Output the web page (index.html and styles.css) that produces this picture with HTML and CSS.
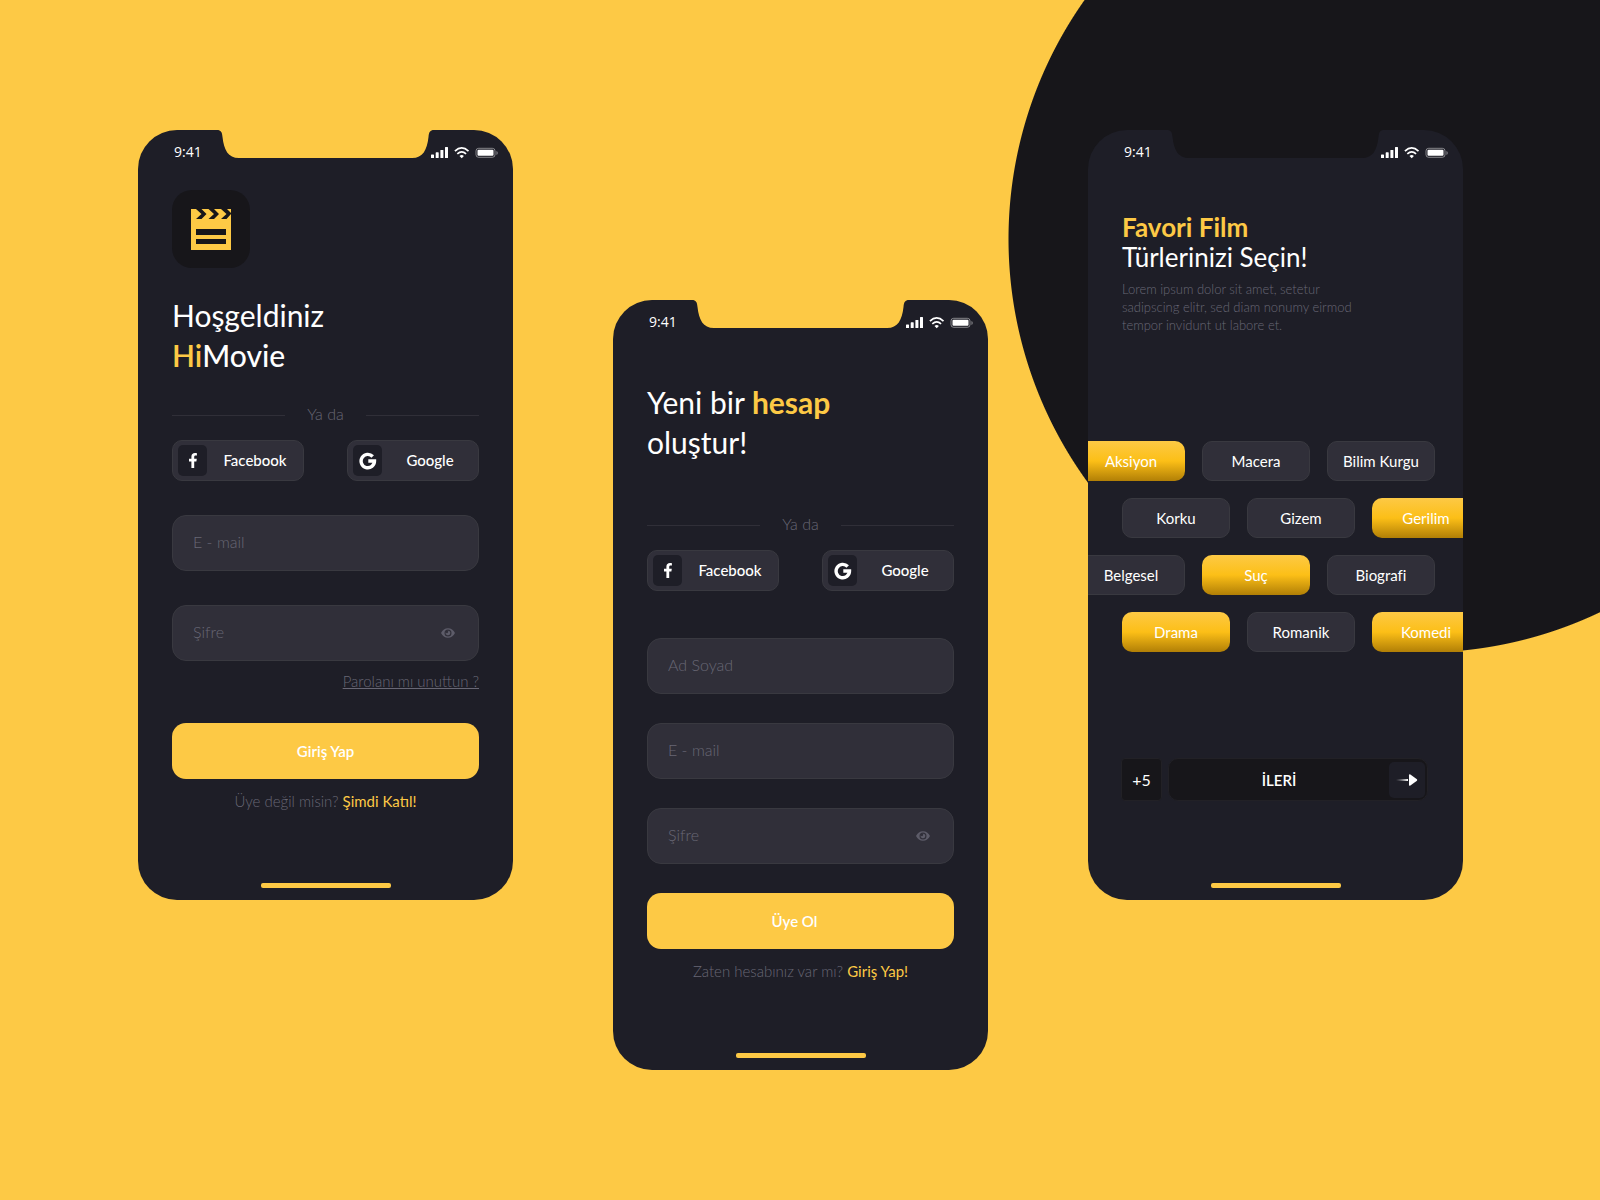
FILE: index.html
```html
<!DOCTYPE html>
<html lang="tr">
<head>
<meta charset="utf-8">
<meta name="viewport" content="width=device-width, initial-scale=1">
<title>HiMovie</title>
<link rel="stylesheet" href="styles.css">
</head>
<body>
<svg class="sprite" aria-hidden="true">
  <symbol id="notch" viewBox="0 0 217 28">
    <path d="M0 0C4 0 5 2 5.500 7C7 20 11 28 22 28H195C206 28 210 20 211.500 7C212 2 213 0 217 0Z" fill="currentColor"/>
  </symbol>
  <symbol id="status" viewBox="0 0 67 12">
    <g fill="#fff">
      <rect x="0" y="7.500" width="3" height="3.500" rx=".6"/><rect x="4.700" y="5.300" width="3" height="5.700" rx=".6"/><rect x="9.400" y="3" width="3" height="8" rx=".6"/><rect x="14" y="0" width="3" height="11" rx=".6"/>
      <rect x="46.500" y="2.800" width="16" height="6" rx="1"/>
      <path d="M30.700 11.200L28.500 8.900Q30.700 7.200 32.900 8.900Z"/>
      <path d="M65.500 4V8Q66.700 7.300 66.700 6T65.500 4Z" opacity=".5"/>
    </g>
    <g fill="none" stroke="#fff" stroke-width="1.700">
      <path d="M23.900 4.100Q30.700 -2.200 37.500 4.100"/><path d="M26.300 6.900Q30.700 3 35.100 6.900"/>
    </g>
    <rect x="45" y="1.300" width="19" height="9" rx="2.600" fill="none" stroke="#fff" stroke-opacity=".45"/>
  </symbol>
  <symbol id="facebook" viewBox="0 0 8 15">
    <path d="M2.400 15V8.500H0V5.800H2.400V3.700C2.400 1.300 3.800 0 6 0C7 0 7.900.2 7.900.2V2.500H6.700C5.500 2.500 5.200 3.200 5.200 4V5.800H7.800L7.400 8.500H5.200V15Z" fill="#fff"/>
  </symbol>
  <symbol id="google" viewBox="0 0 18 18">
    <path d="M13.700 4.500A6.700 6.700 0 1 0 15.500 9H9.300" fill="none" stroke="#fff" stroke-width="3.400"/>
  </symbol>
  <symbol id="eye" viewBox="0 0 14 10">
    <path fill-rule="evenodd" d="M0 5C1.500 2 4 .3 7 .3S12.500 2 14 5C12.500 8 10 9.700 7 9.700S1.500 8 0 5ZM7 1.500A3.500 3.500 0 1 0 7 8.500A3.500 3.500 0 1 0 7 1.500ZM7 2.700A2.300 2.300 0 1 1 4.800 4.300A1.200 1.200 0 1 0 6.400 2.800Z" fill="currentColor"/>
  </symbol>
</svg>
<main class="stage">

  <section class="phone">
    <header class="status">
      <svg class="notch"><use href="#notch"/></svg>
      <span>9:41</span>
      <svg class="status-icons"><use href="#status"/></svg>
    </header>
    <form class="screen">
      <div class="logo">
        <svg width="40" height="41" viewBox="0 0 40 41">
          <path fill="#fdc945" fill-rule="evenodd" d="M0 0H5L10.500 5L5 10H10.500L15.500 5L10.500 0H17.500L23 5L17.500 10H23L28 5L23 0H30L35.500 5L30 10H35.500L40 5V41H0ZM5 20V26H35V20ZM5 30V35H35V30Z"/>
          <path fill="#fdc945" d="M36 0H40V4Z"/>
        </svg>
      </div>
      <h1 class="title title-login">Hoşgeldiniz<br><span class="medium"><span class="accent">Hi</span>Movie</span></h1>
      <div class="or"><span>Ya da</span></div>
      <div class="social">
        <button type="button"><span class="badge"><svg width="8" height="15"><use href="#facebook"/></svg></span><span class="social-label">Facebook</span></button>
        <button type="button"><span class="badge"><svg width="18" height="18"><use href="#google"/></svg></span><span class="social-label">Google</span></button>
      </div>
      <div class="fields fields-login">
        <label class="field"><input type="email" placeholder="E - mail" aria-label="E - mail"></label>
        <label class="field"><input type="password" placeholder="Şifre" aria-label="Şifre"><svg width="14" height="10"><use href="#eye"/></svg></label>
      </div>
      <a class="forgot" href="#">Parolanı mı unuttun ?</a>
      <button class="primary primary-login" type="button">Giriş Yap</button>
      <p class="switch">Üye değil misin? <a href="#">Şimdi Katıl!</a></p>
    </form>
    <div class="home"></div>
  </section>

  <section class="phone phone-lower">
    <header class="status">
      <svg class="notch"><use href="#notch"/></svg>
      <span>9:41</span>
      <svg class="status-icons"><use href="#status"/></svg>
    </header>
    <form class="screen">
      <h1 class="title title-join">Yeni bir <b class="accent">hesap</b><br>oluştur!</h1>
      <div class="or or-join"><span>Ya da</span></div>
      <div class="social">
        <button type="button"><span class="badge"><svg width="8" height="15"><use href="#facebook"/></svg></span><span class="social-label">Facebook</span></button>
        <button type="button"><span class="badge"><svg width="18" height="18"><use href="#google"/></svg></span><span class="social-label">Google</span></button>
      </div>
      <div class="fields fields-join">
        <label class="field"><input type="text" placeholder="Ad Soyad" aria-label="Ad Soyad"></label>
        <label class="field"><input type="email" placeholder="E - mail" aria-label="E - mail"></label>
        <label class="field"><input type="password" placeholder="Şifre" aria-label="Şifre"><svg width="14" height="10"><use href="#eye"/></svg></label>
      </div>
      <button class="primary primary-join" type="button">Üye Ol</button>
      <p class="switch">Zaten hesabınız var mı? <a href="#">Giriş Yap!</a></p>
    </form>
    <div class="home"></div>
  </section>

  <section class="phone phone-dark">
    <header class="status">
      <svg class="notch"><use href="#notch"/></svg>
      <span>9:41</span>
      <svg class="status-icons"><use href="#status"/></svg>
    </header>
    <div class="screen">
      <h1 class="title title-genres"><b class="accent">Favori Film</b><br>Türlerinizi Seçin!</h1>
      <p class="intro">Lorem ipsum dolor sit amet, setetur<br>sadipscing elitr, sed diam nonumy eirmod<br>tempor invidunt ut labore et.</p>
    </div>
    <div class="genres">
      <div class="genre-row shifted">
        <button class="chip on" type="button">Aksiyon</button><button class="chip" type="button">Macera</button><button class="chip" type="button">Bilim Kurgu</button>
      </div>
      <div class="genre-row">
        <button class="chip" type="button">Korku</button><button class="chip" type="button">Gizem</button><button class="chip on" type="button">Gerilim</button>
      </div>
      <div class="genre-row shifted">
        <button class="chip" type="button">Belgesel</button><button class="chip on" type="button">Suç</button><button class="chip" type="button">Biografi</button>
      </div>
      <div class="genre-row">
        <button class="chip on" type="button">Drama</button><button class="chip" type="button">Romanik</button><button class="chip on" type="button">Komedi</button>
      </div>
    </div>
    <div class="next-row">
      <span class="count">+5</span>
      <button class="next" type="button"><span class="next-label">İLERİ</span>
        <span class="next-arrow">
          <svg width="22" height="12" viewBox="0 0 22 12">
            <defs><linearGradient id="tail"><stop stop-color="#fff" stop-opacity="0"/><stop offset="1" stop-color="#fff"/></linearGradient></defs>
            <path d="M0 5.500L12 5V7L0 6.500Z" fill="url(#tail)"/>
            <path d="M13 1.200Q13-.4 14.400.6L20.600 5.100Q21.800 6 20.600 6.900L14.400 11.400Q13 12.400 13 10.800Z" fill="#fff"/>
          </svg>
        </span>
      </button>
    </div>
    <div class="home"></div>
  </section>

</main>
</body>
</html>
```
FILE: styles.css
```css
:root {
  --yellow: #fdc945;
  --black: #17161a;
  --phone: #1e1e27;
  --field: #302f39;
  --line: #393940;
  --muted: #686775;
}

* { box-sizing: border-box; }

body {
  margin: 0;
  min-height: 100vh;
  background: var(--yellow) radial-gradient(circle at calc(100% - 178px) 239px, var(--black) 413px, var(--yellow) 414px) no-repeat;
  color: #fff;
  font: 400 15px/20px Lato, "Open Sans", sans-serif;
}

h1, p { margin: 0; }
button, input { font: inherit; color: inherit; }
button { padding: 0; border: 0; cursor: pointer; }
svg { display: block; flex: none; }
.sprite { position: absolute; width: 0; height: 0; }

.stage {
  display: flex;
  justify-content: center;
  align-items: flex-start;
  gap: 100px;
  padding: 130px 0 130px 1px;
}

/* Phone frame */
.phone {
  position: relative;
  display: flex;
  flex-direction: column;
  flex: none;
  width: 375px;
  min-height: 770px;
  padding-bottom: 12px;
  overflow: hidden;
  border-radius: 39px;
  background: var(--phone);
}
.phone-lower { margin-top: 170px; }

.status {
  display: flex;
  justify-content: space-between;
  align-items: flex-start;
  height: 60px;
  padding: 12px 15px 0 36px;
  font: 400 14px/20px "Open Sans", sans-serif;
}
.status-icons { position: relative; width: 67px; height: 12px; margin-top: 5px; }
.notch {
  position: absolute;
  top: 0;
  left: 79px;
  width: 217px;
  height: 28px;
  color: var(--yellow);
}
.phone-dark .notch { color: var(--black); }

.home {
  width: 130px;
  height: 5px;
  margin: auto auto 0;
  border-radius: 2px;
  background: var(--yellow);
}

.screen { display: flex; flex-direction: column; padding: 0 34px; }

.logo {
  display: grid;
  place-items: center;
  width: 78px;
  height: 78px;
  border-radius: 20px;
  background: var(--black);
}

.title { font-weight: 400; font-size: 30px; line-height: 40px; }
.title-login { margin-top: 27px; }
.title-join { margin-top: 22px; }
.title-genres { margin-top: 22px; font-size: 26px; line-height: 30px; }
.accent { color: var(--yellow); }
.medium { font-weight: 500; }
.medium .accent { font-weight: 600; }

.or {
  display: flex;
  justify-content: space-between;
  align-items: center;
  margin-top: 30px;
  color: var(--muted);
  font-size: 16px;
  font-weight: 300;
}
.or span { padding-bottom: 2px; margin-top: -1px; }
.or::before, .or::after { content: ""; width: 113px; height: 1px; background: #302f38; }
.or-join { margin-top: 53px; }

.social { display: flex; justify-content: space-between; margin-top: 14px; }
.social button {
  display: flex;
  align-items: center;
  width: 132px;
  height: 41px;
  padding: 4px 0 4px 5px;
  border: 1px solid var(--line);
  border-radius: 10px;
  background: var(--field);
  font-weight: 500;
}
.badge {
  display: grid;
  place-items: center;
  width: 29px;
  height: 31px;
  border-radius: 5px;
  background: var(--phone);
}
.social-label { flex: 1; padding-bottom: 1px; text-align: center; }

.fields { display: flex; flex-direction: column; }
.fields-login { gap: 34px; margin-top: 34px; }
.fields-join { gap: 29px; margin-top: 47px; }
.field {
  display: flex;
  align-items: center;
  height: 56px;
  padding: 0 23px 0 20px;
  border: 1px solid var(--line);
  border-radius: 14px;
  background: var(--field);
  color: #5d5c69;
}
.field input {
  flex: 1;
  min-width: 0;
  padding: 0 0 2px;
  border: 0;
  outline: 0;
  background: none;
  font-size: 16px;
  font-weight: 300;
}
.field input::placeholder { color: var(--muted); opacity: 1; }

.forgot {
  align-self: flex-end;
  margin-top: 10px;
  color: var(--muted);
  font-weight: 300;
}
.primary {
  height: 56px;
  padding-bottom: 1px;
  border-radius: 14px;
  background: var(--yellow);
  font-weight: 600;
}
.primary-login { margin-top: 32px; }
.primary-join { margin-top: 29px; padding-right: 12px; }

.switch { margin-top: 12px; text-align: center; color: var(--muted); font-weight: 300; }
.switch a { color: var(--yellow); text-decoration: none; font-weight: 400; }

/* Genre picker */
.intro { margin-top: 8px; color: var(--muted); font-weight: 300; font-size: 13px; line-height: 18px; }
.genres { display: flex; flex-direction: column; gap: 17px; margin-top: 107px; }
.genre-row { display: flex; gap: 17px; padding-left: 34px; }
.genre-row.shifted { padding: 0; margin-left: -11px; }
.chip {
  flex: none;
  width: 108px;
  height: 40px;
  padding-bottom: 1px;
  border: 1px solid var(--line);
  border-radius: 10px;
  background: var(--field);
}
.chip.on { border: 0; background: linear-gradient(#fdc945, #fcbf17 50%, #b17f06); }

.next-row { display: flex; gap: 6px; margin-top: 106px; padding: 0 27px 0 33px; }
.count, .next { height: 43px; border: 1px solid #222126; background: var(--black); }
.count {
  display: grid;
  place-items: center;
  width: 41px;
  border-radius: 4px;
  font-size: 16px;
}
.next { display: flex; align-items: center; width: 260px; padding-right: 2px; border-radius: 10px; }
.next-label { flex: 1; font-weight: 600; }
.next-arrow {
  display: grid;
  place-items: center;
  width: 36px;
  height: 36px;
  border-radius: 5px;
  background: var(--phone);
}
```
